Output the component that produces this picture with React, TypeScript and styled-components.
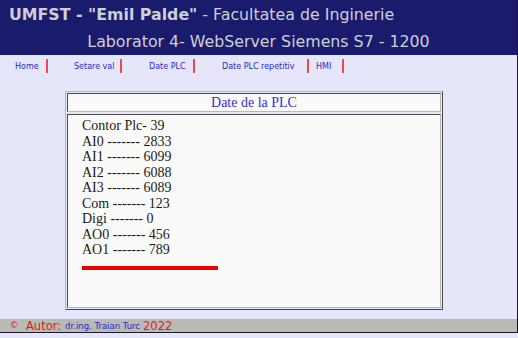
import styled, { createGlobalStyle } from "styled-components";

const GlobalStyle = createGlobalStyle`
  html, body {
    margin: 0;
    padding: 0;
    background-color: #e6e6fa;
  }
`;

const navItems = [
  { label: "Home", lead: 15, width: 31 },
  { label: "Setare val", lead: 26, width: 46 },
  { label: "Date PLC", lead: 27, width: 44 },
  { label: "Date PLC repetitiv", lead: 27, width: 85 },
  { label: "HMI", lead: 7, width: 26 },
];

const values = [
  "Contor Plc- 39",
  "AI0 ------- 2833",
  "AI1 ------- 6099",
  "AI2 ------- 6088",
  "AI3 ------- 6089",
  "Com ------- 123",
  "Digi ------- 0",
  "AO0 ------- 456",
  "AO1 ------- 789",
];

export default function App() {
  return (
    <>
      <GlobalStyle />
      <Frame>
        <Header>
          <TitleLine>
            <b>UMFST - "Emil Palde"</b> - Facultatea de Inginerie
          </TitleLine>
          <SubLine>Laborator 4- WebServer Siemens S7 - 1200</SubLine>
        </Header>

        <Nav>
          {navItems.map((item) => (
            <NavItem key={item.label} $lead={item.lead} $width={item.width}>
              <NavLink href="#">{item.label}</NavLink>
            </NavItem>
          ))}
        </Nav>

        <Main>
          <Panel>
            <PanelTitle>Date de la PLC</PanelTitle>
            <PanelBody>
              {values.map((v) => (
                <ValueRow key={v}>{v}</ValueRow>
              ))}
              <RedRule />
            </PanelBody>
          </Panel>
        </Main>

        <Footer>
          <Copy>©</Copy>
          <Red>Autor:</Red>
          <AuthorName>dr.ing. Traian Turc</AuthorName>
          <Year>2022</Year>
        </Footer>
      </Frame>
    </>
  );
}

const Frame = styled.div`
  width: 518px;
  height: 333px;
  box-sizing: border-box;
  border-right: 1px solid #1a1a2a;
  border-bottom: 1px solid #1a1a2a;
  display: flex;
  flex-direction: column;
`;

const Header = styled.div`
  height: 55px;
  background-color: #1b1b6e;
  color: #cfcfd6;
  font-family: "DejaVu Sans", Verdana, sans-serif;
  font-size: 15.8px;
  display: flex;
  flex-direction: column;
`;

const TitleLine = styled.div`
  padding: 5px 0 0 9px;
  height: 20px;
  line-height: 20px;
  white-space: nowrap;
`;

const SubLine = styled.div`
  margin-top: 7px;
  line-height: 20px;
  text-align: center;
  white-space: nowrap;
`;

const Nav = styled.div`
  display: flex;
  padding-top: 4px;
  height: 14px;
`;

const NavItem = styled.div<{ $lead: number; $width: number }>`
  margin-left: ${(p) => p.$lead}px;
  width: ${(p) => p.$width}px;
  height: 14px;
  border-right: 2px solid #f04848;
  display: flex;
  align-items: center;
`;

const NavLink = styled.a`
  font-family: "DejaVu Sans", Verdana, sans-serif;
  font-size: 8px;
  color: #2828c8;
  text-decoration: none;
  white-space: nowrap;
`;

const Main = styled.div`
  flex: 1;
  padding: 18px 0 0 65px;
`;

const Panel = styled.div`
  width: 378px;
  height: 219px;
  box-sizing: border-box;
  border: 1px solid;
  border-color: #b8b8b8 #4a4a4a #4a4a4a #b8b8b8;
  padding: 1px;
  display: flex;
  flex-direction: column;
  gap: 2px;
`;

const PanelTitle = styled.div`
  height: 19px;
  box-sizing: border-box;
  border: 1px solid;
  border-color: #4a4a4a #b8b8b8 #b8b8b8 #4a4a4a;
  background-color: #fafaf9;
  color: #3030d8;
  font-family: "Liberation Serif", "Times New Roman", serif;
  font-size: 14px;
  line-height: 17px;
  text-align: center;
`;

const PanelBody = styled.div`
  flex: 1;
  box-sizing: border-box;
  border: 1px solid;
  border-color: #4a4a4a #b8b8b8 #b8b8b8 #4a4a4a;
  background-color: #fafaf9;
  padding: 3px 0 0 14px;
`;

const ValueRow = styled.div`
  font-family: "Liberation Serif", "Times New Roman", serif;
  font-size: 14px;
  line-height: 15.5px;
  color: #1a1a1a;
  white-space: nowrap;
`;

const RedRule = styled.div`
  width: 136px;
  height: 4px;
  margin-top: 8px;
  background-color: #f00000;
`;

const Footer = styled.div`
  height: 13px;
  background-color: #b9bab4;
  display: flex;
  align-items: center;
  white-space: nowrap;
  font-family: "DejaVu Sans", Verdana, sans-serif;
`;

const Copy = styled.span`
  color: #e02020;
  font-size: 8px;
  margin-left: 10px;
  width: 16px;
`;

const Red = styled.span`
  color: #f01010;
  font-size: 11.5px;
  margin-right: 4px;
`;

const AuthorName = styled.span`
  color: #2828c8;
  font-size: 8.5px;
  margin-right: 3px;
`;

const Year = styled.span`
  color: #e02020;
  font-size: 11.5px;
`;
